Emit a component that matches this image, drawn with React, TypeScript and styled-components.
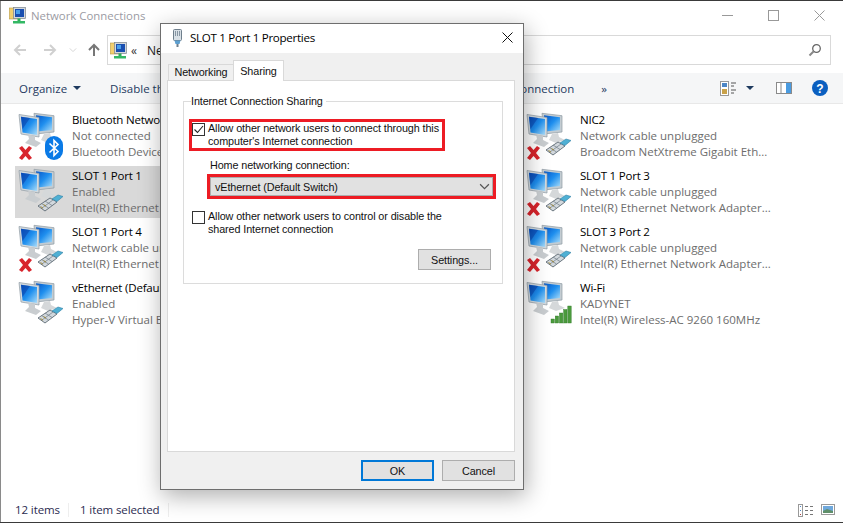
import React, { useId } from 'react'
import styled, { createGlobalStyle } from 'styled-components'

const GlobalStyle = createGlobalStyle`
  html, body {
    margin: 0;
    height: 100%;
    background: #3a3a3a;
    overflow: hidden;
  }
  * { box-sizing: border-box; }
`

const Win = styled.div`
  position: relative;
  width: 843px;
  height: 521px;
  margin-top: 1px;
  background: #fff;
  border-left: 1px solid #8a8a8a;
  display: flex;
  flex-direction: column;
  font-family: "Open Sans", "Liberation Sans", sans-serif;
  font-size: 11.5px;
  overflow: hidden;
`

const TitleBar = styled.div`
  height: 32px;
  display: flex;
  align-items: center;
  padding: 0 1px 3px 8px;
  color: #9b9ba3;
  font-size: 11.4px;
`

const TitleText = styled.span`
  margin-left: 5px;
  flex: 1;
`

const WinButton = styled.div`
  width: 46px;
  height: 29px;
  display: flex;
  align-items: center;
  justify-content: center;
`

const NavRow = styled.div`
  height: 40px;
  display: flex;
  align-items: center;
  padding: 0 12px 6px 4px;
`

const NavButton = styled.div<{ $w: number }>`
  width: ${(p) => p.$w}px;
  display: flex;
  justify-content: center;
`

const AddressBox = styled.div`
  flex: 1;
  height: 30px;
  border: 1px solid #d9d9d9;
  display: flex;
  align-items: center;
  padding: 0 8px 0 2px;
  color: #1a1a1a;
  font-size: 12px;
`

const Crumb = styled.span`
  margin-left: 4px;
  width: 16px;
  color: #333;
`

const AddressText = styled.span`
  flex: 1;
`

const Toolbar = styled.div`
  height: 31px;
  background: #f5f6f7;
  border-bottom: 1px solid #e8e8e8;
  display: flex;
  align-items: center;
  padding: 0 15px 0 18px;
  color: #1e3a5f;
  gap: 27px;
  white-space: nowrap;
`

const ToolItem = styled.span<{ $first?: boolean }>`
  display: flex;
  align-items: center;
  gap: 6px;
  margin-right: ${(p) => (p.$first ? '2px' : '0')};
`

const Caret = styled.span`
  width: 0;
  height: 0;
  border-left: 4px solid transparent;
  border-right: 4px solid transparent;
  border-top: 4px solid #1e3a5f;
`

const ToolIcons = styled.div`
  margin-left: auto;
  display: flex;
  align-items: center;
`

const ToolGap = styled.span<{ $w: number }>`
  width: ${(p) => p.$w}px;
`

const Columns = styled.div`
  flex: 1;
  display: flex;
  padding: 6px 0 0 14px;
`

const Column = styled.div`
  width: 254px;
  display: flex;
  flex-direction: column;
  gap: 4px;
`

const Row = styled.div<{ $selected?: boolean }>`
  height: 52px;
  display: flex;
  align-items: center;
  padding-left: 1px;
  background: ${(p) => (p.$selected ? '#d9d9d9' : 'transparent')};
`

const RowText = styled.div`
  margin-left: 8px;
  width: 190px;
  line-height: 16px;
  color: #6d6d6d;
  white-space: nowrap;
`

const RowName = styled.div`
  color: #000;
  letter-spacing: -0.2px;
`

const StatusBar = styled.div`
  height: 22px;
  display: flex;
  align-items: center;
  padding: 0 8px 2px 14px;
  color: #2b2b50;
  letter-spacing: -0.1px;
`

const StatusCell = styled.span<{ $w: number }>`
  width: ${(p) => p.$w}px;
  height: 14px;
  line-height: 14px;
  margin-right: 11px;
  border-right: 1px solid #eee;
`

const StatusIcons = styled.div`
  margin-left: auto;
  display: flex;
  gap: 7px;
`

const Dialog = styled.div`
  position: absolute;
  left: 159px;
  top: 22px;
  width: 364px;
  height: 467px;
  background: #f0f0f0;
  border: 1px solid #6e6e6e;
  box-shadow: 2px 6px 22px rgba(0, 0, 0, 0.32);
  display: flex;
  flex-direction: column;
  font-family: "Liberation Sans", Arial, sans-serif;
  font-size: 10.8px;
  letter-spacing: -0.1px;
  color: #111;
`

const DialogTitle = styled.div`
  height: 29px;
  background: #fff;
  display: flex;
  align-items: center;
  padding: 0 0 2px 11px;
  font-family: "Open Sans", sans-serif;
  font-size: 11.6px;
  letter-spacing: -0.3px;
  color: #000;
`

const DialogName = styled.span`
  margin-left: 7px;
  flex: 1;
`

const DialogClose = styled.div`
  width: 30px;
  margin-right: 1px;
  display: flex;
  justify-content: center;
`

const DialogBody = styled.div`
  flex: 1;
  display: flex;
  flex-direction: column;
  padding: 7px 8px 0 6px;
`

const Tabs = styled.div`
  height: 21px;
  display: flex;
  align-items: flex-end;
  padding-left: 1px;
  position: relative;
  z-index: 1;
  margin-bottom: -1px;
`

const Tab = styled.div<{ $active?: boolean }>`
  height: ${(p) => (p.$active ? 21 : 17)}px;
  width: ${(p) => (p.$active ? 51 : 65)}px;
  display: flex;
  align-items: center;
  justify-content: center;
  padding-bottom: 1px;
  background: ${(p) => (p.$active ? '#fff' : '#f0f0f0')};
  border: 1px solid #d9d9d9;
  border-bottom: ${(p) => (p.$active ? 'none' : '1px solid #d9d9d9')};
  border-right: ${(p) => (p.$active ? '1px solid #d9d9d9' : 'none')};
`

const TabPanel = styled.div`
  height: 372px;
  background: #fff;
  border: 1px solid #d9d9d9;
  padding: 13px 11px 0 15px;
`

const Group = styled.fieldset`
  margin: 0;
  height: 190px;
  padding: 11px 0 0 5px;
  border: 1px solid #dcdcdc;
`

const GroupLegend = styled.legend`
  margin-left: 2px;
  padding: 0 3px 0 0;
  line-height: 14px;
`

const Marked = styled.div`
  border: 3px solid #ed1c24;
`

const CheckMarked = styled(Marked)`
  width: 256px;
  height: 32px;
`

const CheckRow = styled.label`
  display: flex;
  line-height: 13px;
`

const CheckSpacer = styled.div`
  margin: 11px 0 0 3px;
`

const CheckBox = styled.span`
  width: 13px;
  height: 13px;
  margin: 1px 3px 0 0;
  flex: none;
  border: 1px solid #333;
  background: #fff;
  display: flex;
  align-items: center;
  justify-content: center;
`

const HomeBlock = styled.div`
  margin-left: 18px;
`

const HomeLabel = styled.div`
  margin: 7px 0 2px 3px;
  line-height: 14px;
`

const ComboMarked = styled(Marked)`
  width: 289px;
  height: 25px;
`

const Combo = styled.div`
  height: 19px;
  background: #e1e1e1;
  border: 1px solid #adadad;
  display: flex;
  align-items: center;
  justify-content: space-between;
  padding: 0 2px 0 4px;
`

const SettingsRow = styled.div`
  display: flex;
  justify-content: flex-end;
  margin: 13px 11px 0 0;
`

const Btn = styled.div<{ $default?: boolean }>`
  width: 73px;
  height: 21px;
  background: #e1e1e1;
  border: ${(p) => (p.$default ? '2px solid #0078d7' : '1px solid #adadad')};
  display: flex;
  align-items: center;
  justify-content: center;
`

const DialogFooter = styled.div`
  display: flex;
  justify-content: flex-end;
  gap: 8px;
  padding-top: 8px;
`

type Badge = 'x' | 'cable' | 'xcable' | 'bluetooth' | 'wifi'

function NetIcon({ badge }: { badge: Badge }): React.ReactElement {
  const id = useId()
  return (
    <svg width="48" height="48" viewBox="0 0 48 48" style={{ flex: 'none' }}>
      <defs>
        <linearGradient id={id} x1="0" y1="0" x2="1" y2="1">
          <stop offset="0" stopColor="#0756c8" />
          <stop offset="0.5" stopColor="#1f8fee" />
          <stop offset="1" stopColor="#a9dcf9" />
        </linearGradient>
      </defs>
      {/* back monitor */}
      <path d="M18 1.3 L38 3.7 L38 20 L20 22 Z" fill="#c3ccd2" stroke="#8f9ba3" strokeWidth="0.7" />
      <path d="M20 3.3 L36 5.2 L36 18 L21 19.5 Z" fill={`url(#${id})`} />
      <path d="M28 22 L34 21 L35 25 L41 28 L32 31 L25 28 Z" fill="#d5d8da" />
      {/* front monitor */}
      <path d="M3 2.5 L23 5.5 L23 25 L5 22 Z" fill="#d3dadf" stroke="#8f9ba3" strokeWidth="0.7" />
      <path d="M5 4.8 L21 7 L21 23 L6.5 20.5 Z" fill={`url(#${id})`} />
      <path d="M5 4.8 L14 6 L6.5 17 Z" fill="#0a3fa8" opacity="0.55" />
      <path d="M12 22.5 L19 24 L19 28 L25 31 L20 35 L9 31 L13 27 Z" fill="#c9cdd0" />
      {(badge === 'cable' || badge === 'xcable') && (
        <g>
          <path d="M22 38 L34 30 L41 34 L29 43 Z" fill="#d2d8dd" stroke="#5f6b75" strokeWidth="0.9" />
          <path d="M25.5 35.5 L32.5 40 M29 33 L36 37.5 M26 40 L37 32" stroke="#6e7b85" strokeWidth="0.7" />
          <path d="M24.5 38.5 L27 40.2 M27.5 36.5 L30 38.2" stroke="#a08a3a" strokeWidth="1" />
          <path d="M36 31 L42 27 L47 28.5 L41 33.5 Z" fill="#4fb0d4" stroke="#2f80a4" strokeWidth="0.6" />
        </g>
      )}
      {(badge === 'x' || badge === 'xcable' || badge === 'bluetooth') && (
        <path d="M3 36 L6 34 L9.5 38 L13 34 L16 36 L12 41 L16 46 L13 48 L9.5 44 L6 48 L3 46 L7 41 Z" fill="#d8242c" />
      )}
      {badge === 'bluetooth' && (
        <g>
          <rect x="29" y="24" width="18" height="24" rx="9" fill="#0a7ae6" />
          <path d="M33.5 31.5 L42 39.5 L38 43.5 L38 28.5 L42 32.5 L33.5 40.5" fill="none" stroke="#fff" strokeWidth="1.6" />
        </g>
      )}
      {badge === 'wifi' && (
        <g fill="#4b9a3d" stroke="#2f7a28" strokeWidth="0.4">
          <rect x="27" y="39" width="3.4" height="4" />
          <rect x="31.2" y="36" width="3.4" height="7" />
          <rect x="35.4" y="33" width="3.4" height="10" />
          <rect x="39.6" y="29.5" width="3.4" height="13.5" />
          <rect x="43.8" y="26" width="3.4" height="17" />
        </g>
      )}
    </svg>
  )
}

function SmallNetIcon(): React.ReactElement {
  return (
    <svg width="17" height="17" viewBox="0 0 17 17" style={{ flex: 'none' }}>
      <rect x="0.5" y="1" width="10" height="11" fill="#f2cf6e" stroke="#b99a3c" strokeWidth="0.6" />
      <rect x="4.5" y="0.5" width="12" height="11" fill="#d3d8dc" stroke="#7a848c" strokeWidth="0.7" />
      <rect x="6" y="2" width="9" height="8" fill="#1a4fb0" />
      <rect x="7" y="3" width="4" height="4" fill="#4aa0ea" />
      <rect x="8.5" y="11.5" width="3" height="2.5" fill="#2fae5a" />
      <rect x="4" y="14" width="12" height="2.5" fill="#33b864" />
    </svg>
  )
}

function PlugIcon(): React.ReactElement {
  return (
    <svg width="11" height="18" viewBox="0 0 11 18">
      <rect x="1.5" y="0.5" width="8" height="11" rx="1" fill="#d8e0e6" stroke="#6f7f8c" />
      <path d="M3.5 2 V7 M5.5 2 V7 M7.5 2 V7" stroke="#8796a3" />
      <path d="M2.5 11.5 H8.5 L7.5 15 H3.5 Z" fill="#5c9fd0" />
      <rect x="4.5" y="15" width="2" height="3" fill="#6f7f8c" />
    </svg>
  )
}

function Arrow({ dir, color }: { dir: 'l' | 'r' | 'u'; color: string }): React.ReactElement {
  const rot = dir === 'l' ? 0 : dir === 'r' ? 180 : 90
  return (
    <svg width="14" height="14" viewBox="0 0 14 14" style={{ transform: `rotate(${rot}deg)` }}>
      <path d="M13 7 H2 M7 2 L2 7 L7 12" fill="none" stroke={color} strokeWidth="2" />
    </svg>
  )
}

function Chevron({ color, size }: { color: string; size: number }): React.ReactElement {
  return (
    <svg width={size} height={size} viewBox="0 0 10 10">
      <path d="M1 3 L5 7 L9 3" fill="none" stroke={color} strokeWidth="1.1" />
    </svg>
  )
}

function CloseGlyph({ color }: { color: string }): React.ReactElement {
  return (
    <svg width="11" height="11" viewBox="0 0 11 11">
      <path d="M0.5 0.5 L10.5 10.5 M10.5 0.5 L0.5 10.5" stroke={color} strokeWidth="1" />
    </svg>
  )
}

function DetailsIcon(): React.ReactElement {
  return (
    <svg width="18" height="15" viewBox="0 0 18 15" style={{ marginRight: 8 }}>
      <rect x="0.5" y="0.5" width="8" height="14" fill="#fff" stroke="#999" />
      <rect x="2" y="2" width="5" height="4" fill="#4c86c6" />
      <rect x="2" y="8" width="5" height="5" fill="#c9a24a" />
      <path d="M11 2 H16 M11 5 H14 M11 9 H16 M11 12 H14" stroke="#555" />
    </svg>
  )
}

function PaneIcon(): React.ReactElement {
  return (
    <svg width="16" height="12" viewBox="0 0 16 12">
      <rect x="0.5" y="0.5" width="15" height="11" fill="#fff" stroke="#8a8a8a" />
      <rect x="10" y="1" width="5" height="10" fill="#4a9be0" />
      <path d="M5 1 V11" stroke="#8a8a8a" />
    </svg>
  )
}

function ListViewIcon(): React.ReactElement {
  return (
    <svg width="16" height="13" viewBox="0 0 16 13">
      <rect x="0.5" y="0.5" width="4" height="12" fill="#fff" stroke="#999" />
      <path d="M2 2.5 H3 M2 6.5 H3" stroke="#4c86c6" />
      <path d="M2 10.5 H3" stroke="#b0413e" />
      <path d="M7 2.5 H10 M12 2.5 H15 M7 6.5 H10 M12 6.5 H15 M7 10.5 H10 M12 10.5 H15" stroke="#777" />
    </svg>
  )
}

function TilesViewIcon(): React.ReactElement {
  return (
    <svg width="14" height="11" viewBox="0 0 14 11">
      <rect x="0.5" y="0.5" width="13" height="10" fill="#fff" stroke="#999" />
      <rect x="2" y="2" width="10" height="7" fill="#6fa8dc" />
      <path d="M2 7 L6 5 L12 7 V9 H2 Z" fill="#5f8f6a" />
    </svg>
  )
}

type Item = { name: string; status: string; device: string; badge: Badge; selected?: boolean }

const columns: Item[][] = [
  [
    { name: 'Bluetooth Network Connection', status: 'Not connected', device: 'Bluetooth Device (Personal Area...', badge: 'bluetooth' },
    { name: 'SLOT 1 Port 1', status: 'Enabled', device: 'Intel(R) Ethernet Network Adapter...', badge: 'cable', selected: true },
    { name: 'SLOT 1 Port 4', status: 'Network cable unplugged', device: 'Intel(R) Ethernet Network Adapter...', badge: 'xcable' },
    { name: 'vEthernet (Default Switch)', status: 'Enabled', device: 'Hyper-V Virtual Ethernet Adapter', badge: 'cable' },
  ],
  [],
  [
    { name: 'NIC2', status: 'Network cable unplugged', device: 'Broadcom NetXtreme Gigabit Eth...', badge: 'xcable' },
    { name: 'SLOT 1 Port 3', status: 'Network cable unplugged', device: 'Intel(R) Ethernet Network Adapter...', badge: 'xcable' },
    { name: 'SLOT 3 Port 2', status: 'Network cable unplugged', device: 'Intel(R) Ethernet Network Adapter...', badge: 'xcable' },
    { name: 'Wi-Fi', status: 'KADYNET', device: 'Intel(R) Wireless-AC 9260 160MHz', badge: 'wifi' },
  ],
]

export default function App(): React.ReactElement {
  return (
    <>
      <GlobalStyle />
      <Win>
        <TitleBar>
          <SmallNetIcon />
          <TitleText>Network Connections</TitleText>
          <WinButton>
            <svg width="11" height="11" viewBox="0 0 11 11"><path d="M0 5.5 H11" stroke="#999" /></svg>
          </WinButton>
          <WinButton>
            <svg width="11" height="11" viewBox="0 0 11 11"><rect x="0.5" y="0.5" width="10" height="10" fill="none" stroke="#999" /></svg>
          </WinButton>
          <WinButton>
            <CloseGlyph color="#999" />
          </WinButton>
        </TitleBar>
        <NavRow>
          <NavButton $w={30}><Arrow dir="l" color="#d0d0d0" /></NavButton>
          <NavButton $w={30}><Arrow dir="r" color="#d0d0d0" /></NavButton>
          <NavButton $w={16}><Chevron color="#d0d0d0" size={8} /></NavButton>
          <NavButton $w={26}><Arrow dir="u" color="#777" /></NavButton>
          <AddressBox>
            <SmallNetIcon />
            <Crumb>«</Crumb>
            <AddressText>Network and Internet</AddressText>
            <svg width="14" height="14" viewBox="0 0 14 14">
              <circle cx="8.5" cy="5.5" r="3.8" fill="none" stroke="#666" strokeWidth="1.3" />
              <path d="M5.5 8.5 L1.5 12.5" stroke="#888" strokeWidth="2" />
            </svg>
          </AddressBox>
        </NavRow>
        <Toolbar>
          <ToolItem $first>Organize <Caret /></ToolItem>
          <ToolItem>Disable this network device</ToolItem>
          <ToolItem>Diagnose this connection</ToolItem>
          <ToolItem>Rename this connection</ToolItem>
          <ToolItem>»</ToolItem>
          <ToolIcons>
            <DetailsIcon />
            <Caret />
            <ToolGap $w={22} />
            <PaneIcon />
            <ToolGap $w={20} />
            <svg width="16" height="16" viewBox="0 0 16 16">
              <circle cx="8" cy="8" r="8" fill="#0a5fc0" />
              <text x="8" y="12.5" textAnchor="middle" fontSize="12" fontWeight="700" fontFamily="Liberation Sans" fill="#fff">?</text>
            </svg>
          </ToolIcons>
        </Toolbar>
        <Columns>
          {columns.map((items, c) => (
            <Column key={c}>
              {items.map((item) => (
                <Row key={item.name} $selected={item.selected}>
                  <NetIcon badge={item.badge} />
                  <RowText>
                    <RowName>{item.name}</RowName>
                    <div>{item.status}</div>
                    <div>{item.device}</div>
                  </RowText>
                </Row>
              ))}
            </Column>
          ))}
        </Columns>
        <StatusBar>
          <StatusCell $w={54}>12 items</StatusCell>
          <StatusCell $w={89}>1 item selected</StatusCell>
          <StatusIcons>
            <ListViewIcon />
            <TilesViewIcon />
          </StatusIcons>
        </StatusBar>
        <Dialog>
          <DialogTitle>
            <PlugIcon />
            <DialogName>SLOT 1 Port 1 Properties</DialogName>
            <DialogClose><CloseGlyph color="#111" /></DialogClose>
          </DialogTitle>
          <DialogBody>
            <Tabs>
              <Tab>Networking</Tab>
              <Tab $active>Sharing</Tab>
            </Tabs>
            <TabPanel>
              <Group>
                <GroupLegend>Internet Connection Sharing</GroupLegend>
                <CheckMarked>
                  <CheckRow>
                    <CheckBox>
                      <svg width="11" height="11" viewBox="0 0 11 11">
                        <path d="M1.5 5.5 L4.5 8.5 L10 2" fill="none" stroke="#222" strokeWidth="1.1" />
                      </svg>
                    </CheckBox>
                    <span>Allow other network users to connect through this<br />computer's Internet connection</span>
                  </CheckRow>
                </CheckMarked>
                <HomeBlock>
                  <HomeLabel>Home networking connection:</HomeLabel>
                  <ComboMarked>
                    <Combo>
                      vEthernet (Default Switch)
                      <Chevron color="#555" size={11} />
                    </Combo>
                  </ComboMarked>
                </HomeBlock>
                <CheckSpacer>
                  <CheckRow>
                    <CheckBox />
                    <span>Allow other network users to control or disable the<br />shared Internet connection</span>
                  </CheckRow>
                </CheckSpacer>
                <SettingsRow>
                  <Btn>Settings...</Btn>
                </SettingsRow>
              </Group>
            </TabPanel>
            <DialogFooter>
              <Btn $default>OK</Btn>
              <Btn>Cancel</Btn>
            </DialogFooter>
          </DialogBody>
        </Dialog>
      </Win>
    </>
  )
}
